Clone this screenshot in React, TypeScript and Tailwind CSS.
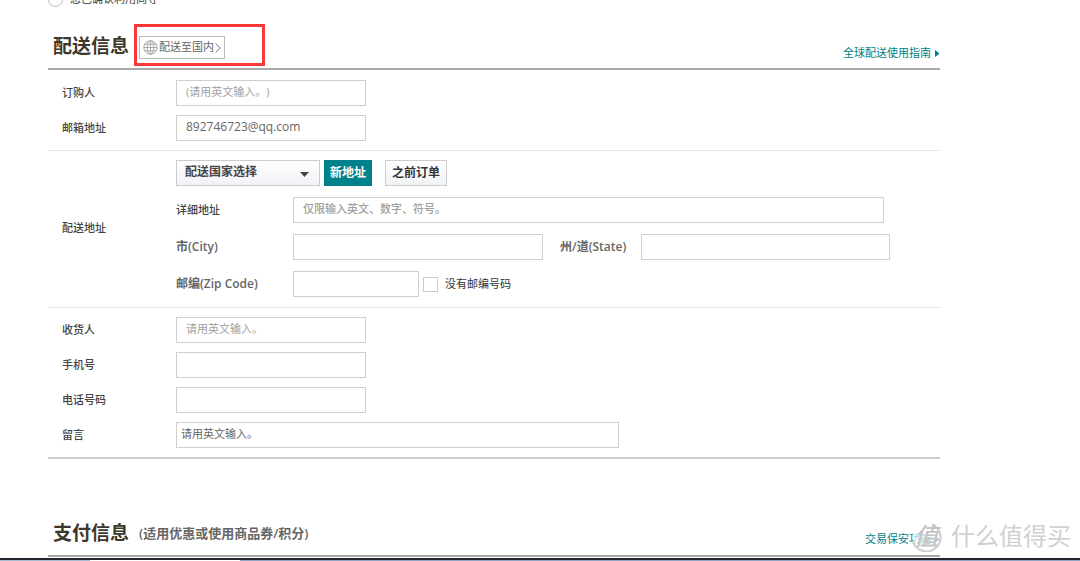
import type { ComponentProps } from 'react'

const inputBase =
  'h-[26px] border border-[#cfcfcf] bg-white pb-[3px] text-xs text-[#666] placeholder:text-[11px] outline-none [text-spacing-trim:space-all]'

function Field({
  className = 'w-[190px] px-[9px] placeholder:text-[#a0a0a0]',
  ...props
}: ComponentProps<'input'>) {
  return <input type="text" className={`${inputBase} ${className}`} {...props} />
}

type RowProps = ComponentProps<'input'> & { id: string; label: string }

function FormRow({ id, label, ...props }: RowProps) {
  return (
    <div className="flex h-[26px] items-center">
      <label htmlFor={id} className="w-32 shrink-0 pl-[14px] text-[11px] font-medium text-[#444]">
        {label}
      </label>
      <Field id={id} {...props} />
    </div>
  )
}

function GlobeIcon() {
  return (
    <svg viewBox="0 0 15 15" className="size-[15px]" fill="none" stroke="#a3a3a3" strokeWidth="0.9">
      <circle cx="7.5" cy="7.5" r="6.7" />
      <ellipse cx="7.5" cy="7.5" rx="3.3" ry="6.7" />
      <path d="M7.5 .8v13.4M.8 7.5h13.4M1.8 4.2h11.4M1.8 10.8h11.4" />
    </svg>
  )
}

function ArrowRight() {
  return (
    <svg viewBox="0 0 5 7" className="h-[7px] w-[5px]" fill="#007f86">
      <path d="M0 0l4.5 3.5L0 7z" />
    </svg>
  )
}

function Watermark() {
  return (
    <div className="pointer-events-none absolute top-[518px] right-[9px] flex items-center gap-[9px] text-[#d0d0d0]">
      <span className="relative flex size-[32px] items-center justify-center">
        <svg viewBox="0 0 32 32" className="absolute inset-0" fill="none" stroke="#cdcdcd" strokeWidth="2">
          <circle cx="16" cy="17" r="13" fill="#fff" fillOpacity="0.65" stroke="none" />
          <path d="M22 4.500A14 14 0 1 1 3 21" />
        </svg>
        <span className="relative text-[24px] leading-8 font-medium text-[#c4c4c4] italic">值</span>
      </span>
      <span className="text-[24px] leading-9">什么值得买</span>
    </div>
  )
}

export default function App() {
  return (
    <div
      lang="zh-CN"
      className="relative h-screen overflow-hidden bg-white font-['Open_Sans','Noto_Sans_CJK_SC',sans-serif] text-[#444]"
    >
      <main className="mr-[140px] ml-12">
        <div className="flex h-[7px] items-end">
          <label className="flex h-4 items-center gap-[7px] text-[11px] leading-4 text-[#333]">
            <input type="radio" name="guide" className="size-[15px] appearance-none rounded-full border border-[#bbb]" />
            您已确认利用向导
          </label>
        </div>

        <section>
          <header className="flex h-[63px] items-start justify-between border-b-2 border-[#aaa] pt-[17px] pl-[5px]">
            <div className="flex items-center gap-[5px]">
              <h2 className="pt-[2px] text-[19px] font-bold text-[#3d382c]">配送信息</h2>
              <div className="h-[42px] w-[131px] border-3 border-[#fb3838] p-[2px] pt-[9px]">
                <button
                  type="button"
                  className="flex h-[23px] w-[86px] items-center border border-[#bbb] pl-[3px] text-[11px] text-[#666]"
                >
                  <GlobeIcon />
                  <span className="ml-px">配送至国内</span>
                  <svg viewBox="0 0 6 10" className="ml-px h-[10px] w-[6px]" fill="none" stroke="#777">
                    <path d="M.7 .7l4.5 4.3L.7 9.3" />
                  </svg>
                </button>
              </div>
            </div>
            <a href="#guide" className="mt-[21px] flex items-center gap-1 text-[11px] leading-4 text-[#007f86]">
              全球配送使用指南
              <ArrowRight />
            </a>
          </header>

          <form className="border-b-2 border-[#ccc]">
            <div className="flex flex-col gap-[9px] border-b border-[#e5e5e5] pt-[10px] pb-[9px]">
              <FormRow id="orderer" label="订购人" placeholder="(请用英文输入。)" />
              <FormRow id="email" label="邮箱地址" defaultValue="892746723@qq.com" />
            </div>

            <div className="flex items-center border-b border-[#e5e5e5] pt-[9px] pb-[10px]">
              <span className="w-32 shrink-0 pl-[14px] text-[11px] font-medium">配送地址</span>
              <div className="flex flex-col gap-[11px] text-[11px] font-medium">
                <div className="flex">
                  <div className="relative">
                    <select
                      aria-label="配送国家选择"
                      className="h-[26px] w-36 appearance-none border border-[#ccc] bg-linear-to-b from-white to-[#f1f2f5] pb-[2px] pl-2 text-xs font-semibold text-[#444]"
                    >
                      <option>配送国家选择</option>
                    </select>
                    <svg viewBox="0 0 9 5" className="pointer-events-none absolute top-3 right-[11px] h-[5px] w-[9px]" fill="#444">
                      <path d="M0 0h9L4.500 5z" />
                    </svg>
                  </div>
                  <button type="button" className="ml-1 h-[26px] w-12 bg-[#00828c] text-xs font-bold text-white">
                    新地址
                  </button>
                  <button
                    type="button"
                    className="ml-[13px] h-[26px] w-[62px] border border-[#ccc] bg-linear-to-b from-white to-[#f1f2f5] text-xs font-bold text-[#333]"
                  >
                    之前订单
                  </button>
                </div>
                <div className="flex items-center">
                  <label htmlFor="street" className="w-[117px]">详细地址</label>
                  <Field
                    id="street"
                    className="w-[591px] px-[9px] placeholder:text-[#a0a0a0]"
                    placeholder="仅限输入英文、数字、符号。"
                  />
                </div>
                <div className="flex items-center">
                  <label htmlFor="city" className="w-[117px] text-xs font-semibold text-[#666]">市(City)</label>
                  <Field id="city" className="w-[250px] px-[9px]" />
                  <label htmlFor="state" className="w-[98px] pl-[17px] text-xs font-semibold text-[#666]">
                    州/道(State)
                  </label>
                  <Field id="state" className="w-[249px] px-[9px]" />
                </div>
                <div className="flex items-center">
                  <label htmlFor="zip" className="w-[117px] text-xs font-semibold text-[#666]">邮编(Zip Code)</label>
                  <Field id="zip" className="w-[126px] px-[9px]" />
                  <input
                    id="nozip"
                    type="checkbox"
                    className="ml-1 size-[15px] appearance-none border border-[#ccc] bg-white"
                  />
                  <label htmlFor="nozip" className="ml-[7px] font-normal text-[#333]">没有邮编号码</label>
                </div>
              </div>
            </div>

            <div className="flex flex-col gap-[9px] py-[9px]">
              <FormRow
                id="receiver"
                label="收货人"
                placeholder="请用英文输入。"
              />
              <FormRow id="mobile" label="手机号" />
              <FormRow id="phone" label="电话号码" />
              <FormRow
                id="message"
                label="留言"
                className="w-[443px] px-1 placeholder:text-[#666]"
                placeholder="请用英文输入。"
              />
            </div>
          </form>
        </section>

        <section className="mt-[58px]">
          <header className="flex h-10 items-start justify-between border-b-2 border-[#aaa] pl-[5px]">
            <h2 className="flex items-center gap-[10px] text-[19px] leading-8 font-bold text-[#3d382c]">
              支付信息
              <span className="text-[13px] font-semibold text-[#666]">(适用优惠或使用商品券/积分)</span>
            </h2>
            <a href="#security" className="mt-[14px] flex items-center gap-1 text-[11px] leading-4 text-[#007f86]">
              交易保安功能
              <ArrowRight />
            </a>
          </header>
        </section>
      </main>
      <div className="mt-px h-[2px] bg-[#22232b]" />
      <div className="flex h-[2px]">
        <div className="w-[90px] bg-[#a9bcd3]" />
        <div className="w-[150px] bg-white" />
        <div className="flex-1 bg-[#8fa3c4]" />
      </div>
      <Watermark />
    </div>
  )
}
